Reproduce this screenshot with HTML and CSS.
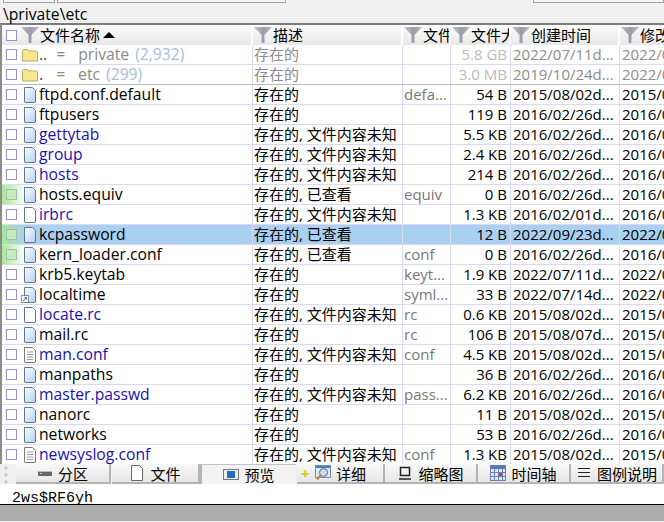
FILE: index.html
```html
<!DOCTYPE html>
<html lang="en">
<head>
  <meta charset="UTF-8">
  <title>\private\etc</title>
  <link rel="stylesheet" href="styles.css">
</head>
<body>
  <svg class="defs" width="0" height="0">
    <defs>
      <linearGradient id="g-doc" x1="0" y1="0" x2="1" y2="1">
        <stop offset="0" stop-color="#fbfdff"/>
        <stop offset="1" stop-color="#b4d0f2"/>
      </linearGradient>
      <linearGradient id="g-flt" x1="0" y1="0" x2="1" y2="0">
        <stop offset="0" stop-color="#c4c4cc"/>
        <stop offset=".5" stop-color="#9c9ca8"/>
        <stop offset="1" stop-color="#b8b8c2"/>
      </linearGradient>
    </defs>
    <symbol id="i-filter" viewBox="0 0 18 16"><path d="M0 0h18l-7.500 8v8h-3v-8z" fill="url(#g-flt)"/></symbol>
    <symbol id="i-folder" viewBox="0 0 16 14"><path d="M.5 13V2.500l1-1h4l1 1.500h8l1 1V13z" fill="#fbe68f" stroke="#b5ad6b"/></symbol>
    <symbol id="i-file" viewBox="0 0 14 16"><path d="M1.500.5h8l3 3V15l-.5.500H2l-.5-.5z" fill="url(#g-doc)" stroke="#5f7690"/></symbol>
    <symbol id="i-blank" viewBox="0 0 14 16"><path d="M1.500.5h8l3 3V15l-.5.500H2l-.5-.5z" fill="#fff" stroke="#5f7690"/></symbol>
    <symbol id="i-text" viewBox="0 0 14 16"><path d="M1.500.5h8l3 3V15l-.5.500H2l-.5-.5z" fill="#fff" stroke="#777"/><path d="M4 5h6M4 7.500h6M4 10h6M4 12.500h6" stroke="#999"/></symbol>
  </svg>

  <div class="toolbar-edge">
    <span class="edge-box edge-a"></span>
    <span class="edge-box edge-b"></span>
    <span class="edge-box edge-c"></span>
  </div>
  <div class="path">\private\etc</div>

  <div class="list">
    <div class="row head">
      <div class="c name"><i class="chk"></i><svg class="flt"><use href="#i-filter"/></svg>文件名称<span class="sort"></span></div>
      <div class="c desc"><svg class="flt"><use href="#i-filter"/></svg>描述</div>
      <div class="c ext"><svg class="flt"><use href="#i-filter"/></svg>文件</div>
      <div class="c size"><svg class="flt"><use href="#i-filter"/></svg>文件大小</div>
      <div class="c created"><svg class="flt"><use href="#i-filter"/></svg>创建时间</div>
      <div class="c modified"><svg class="flt"><use href="#i-filter"/></svg>修改时间</div>
    </div>

    <div class="row dim">
      <div class="c name"><i class="chk"></i><svg class="ico folder"><use href="#i-folder"/></svg><span class="dots">..</span><span class="eq">=</span><span class="parent">private</span><span class="count">(2,932)</span></div>
      <div class="c desc">存在的</div><div class="c ext"></div><div class="c size">5.8 GB</div><div class="c created">2022/07/11d...</div><div class="c modified">2022/07/11d...</div>
    </div>
    <div class="row dim dim-last">
      <div class="c name"><i class="chk"></i><svg class="ico folder"><use href="#i-folder"/></svg><span class="dots dot-one">.</span><span class="eq">=</span><span class="parent">etc</span><span class="count">(299)</span></div>
      <div class="c desc">存在的</div><div class="c ext"></div><div class="c size">3.0 MB</div><div class="c created">2019/10/24d...</div><div class="c modified">2022/07/11d...</div>
    </div>
    <div class="row">
      <div class="c name"><i class="chk"></i><svg class="ico"><use href="#i-file"/></svg>ftpd.conf.default</div>
      <div class="c desc">存在的</div><div class="c ext">defa...</div><div class="c size">54 B</div><div class="c created">2015/08/02d...</div><div class="c modified">2015/08/02d...</div>
    </div>
    <div class="row">
      <div class="c name"><i class="chk"></i><svg class="ico"><use href="#i-file"/></svg>ftpusers</div>
      <div class="c desc">存在的</div><div class="c ext"></div><div class="c size">119 B</div><div class="c created">2016/02/26d...</div><div class="c modified">2016/02/26d...</div>
    </div>
    <div class="row unread">
      <div class="c name"><i class="chk"></i><svg class="ico"><use href="#i-file"/></svg>gettytab</div>
      <div class="c desc">存在的, 文件内容未知</div><div class="c ext"></div><div class="c size">5.5 KB</div><div class="c created">2016/02/26d...</div><div class="c modified">2016/02/26d...</div>
    </div>
    <div class="row unread">
      <div class="c name"><i class="chk"></i><svg class="ico"><use href="#i-file"/></svg>group</div>
      <div class="c desc">存在的, 文件内容未知</div><div class="c ext"></div><div class="c size">2.4 KB</div><div class="c created">2016/02/26d...</div><div class="c modified">2016/02/26d...</div>
    </div>
    <div class="row unread">
      <div class="c name"><i class="chk"></i><svg class="ico"><use href="#i-file"/></svg>hosts</div>
      <div class="c desc">存在的, 文件内容未知</div><div class="c ext"></div><div class="c size">214 B</div><div class="c created">2016/02/26d...</div><div class="c modified">2016/02/26d...</div>
    </div>
    <div class="row seen">
      <div class="c name"><i class="chk"></i><svg class="ico"><use href="#i-file"/></svg>hosts.equiv</div>
      <div class="c desc">存在的, 已查看</div><div class="c ext">equiv</div><div class="c size">0 B</div><div class="c created">2016/02/26d...</div><div class="c modified">2016/02/26d...</div>
    </div>
    <div class="row unread">
      <div class="c name"><i class="chk"></i><svg class="ico"><use href="#i-blank"/></svg>irbrc</div>
      <div class="c desc">存在的, 文件内容未知</div><div class="c ext"></div><div class="c size">1.3 KB</div><div class="c created">2016/02/01d...</div><div class="c modified">2016/02/01d...</div>
    </div>
    <div class="row seen selected">
      <div class="c name"><i class="chk"></i><svg class="ico"><use href="#i-file"/></svg>kcpassword</div>
      <div class="c desc">存在的, 已查看</div><div class="c ext"></div><div class="c size">12 B</div><div class="c created">2022/09/23d...</div><div class="c modified">2022/09/23d...</div>
    </div>
    <div class="row seen">
      <div class="c name"><i class="chk"></i><svg class="ico"><use href="#i-file"/></svg>kern_loader.conf</div>
      <div class="c desc">存在的, 已查看</div><div class="c ext">conf</div><div class="c size">0 B</div><div class="c created">2016/02/26d...</div><div class="c modified">2016/02/26d...</div>
    </div>
    <div class="row">
      <div class="c name"><i class="chk"></i><svg class="ico"><use href="#i-file"/></svg>krb5.keytab</div>
      <div class="c desc">存在的</div><div class="c ext">keyt...</div><div class="c size">1.9 KB</div><div class="c created">2022/07/11d...</div><div class="c modified">2022/07/11d...</div>
    </div>
    <div class="row">
      <div class="c name"><i class="chk"></i><span class="link-wrap"><svg class="ico"><use href="#i-file"/></svg><svg class="link-badge" viewBox="0 0 8 8"><rect x=".5" y=".5" width="7" height="7" fill="#fff" stroke="#333" stroke-dasharray="1 1"/><path d="M2 6l3-3M3.500 2.500H5.500V4.500" fill="none" stroke="#1f7fd8"/></svg></span>localtime</div>
      <div class="c desc">存在的</div><div class="c ext">syml...</div><div class="c size">33 B</div><div class="c created">2022/07/14d...</div><div class="c modified">2022/07/14d...</div>
    </div>
    <div class="row unread">
      <div class="c name"><i class="chk"></i><svg class="ico"><use href="#i-blank"/></svg>locate.rc</div>
      <div class="c desc">存在的, 文件内容未知</div><div class="c ext">rc</div><div class="c size">0.6 KB</div><div class="c created">2015/08/02d...</div><div class="c modified">2015/08/02d...</div>
    </div>
    <div class="row">
      <div class="c name"><i class="chk"></i><svg class="ico"><use href="#i-file"/></svg>mail.rc</div>
      <div class="c desc">存在的</div><div class="c ext">rc</div><div class="c size">106 B</div><div class="c created">2015/08/07d...</div><div class="c modified">2015/08/07d...</div>
    </div>
    <div class="row unread">
      <div class="c name"><i class="chk"></i><svg class="ico"><use href="#i-text"/></svg>man.conf</div>
      <div class="c desc">存在的, 文件内容未知</div><div class="c ext">conf</div><div class="c size">4.5 KB</div><div class="c created">2015/08/02d...</div><div class="c modified">2015/08/02d...</div>
    </div>
    <div class="row">
      <div class="c name"><i class="chk"></i><svg class="ico"><use href="#i-file"/></svg>manpaths</div>
      <div class="c desc">存在的</div><div class="c ext"></div><div class="c size">36 B</div><div class="c created">2016/02/26d...</div><div class="c modified">2016/02/26d...</div>
    </div>
    <div class="row unread">
      <div class="c name"><i class="chk"></i><svg class="ico"><use href="#i-file"/></svg>master.passwd</div>
      <div class="c desc">存在的, 文件内容未知</div><div class="c ext">pass...</div><div class="c size">6.2 KB</div><div class="c created">2016/02/26d...</div><div class="c modified">2016/02/26d...</div>
    </div>
    <div class="row">
      <div class="c name"><i class="chk"></i><svg class="ico"><use href="#i-file"/></svg>nanorc</div>
      <div class="c desc">存在的</div><div class="c ext"></div><div class="c size">11 B</div><div class="c created">2015/08/02d...</div><div class="c modified">2015/08/02d...</div>
    </div>
    <div class="row">
      <div class="c name"><i class="chk"></i><svg class="ico"><use href="#i-file"/></svg>networks</div>
      <div class="c desc">存在的</div><div class="c ext"></div><div class="c size">53 B</div><div class="c created">2016/02/26d...</div><div class="c modified">2016/02/26d...</div>
    </div>
    <div class="row unread">
      <div class="c name"><i class="chk"></i><svg class="ico"><use href="#i-text"/></svg>newsyslog.conf</div>
      <div class="c desc">存在的, 文件内容未知</div><div class="c ext">conf</div><div class="c size">1.3 KB</div><div class="c created">2015/08/02d...</div><div class="c modified">2015/08/02d...</div>
    </div>
  </div>

  <div class="tabs">
    <div class="tab t1"><svg class="tab-ico" viewBox="0 0 16 16"><rect x="1" y="6" width="14" height="5" rx="1" fill="#666"/><rect x="1" y="6" width="14" height="1" fill="#bbb"/><rect x="3" y="8" width="2" height="1" fill="#6f6"/></svg>分区</div>
    <div class="tab t2"><svg class="tab-ico" viewBox="0 0 16 16"><path d="M2.500.5h8l3 3v12h-11z" fill="#fff" stroke="#666"/></svg>文件</div>
    <div class="tab t3"><svg class="tab-ico" viewBox="0 0 16 16"><rect x=".5" y="3.500" width="15" height="10" fill="#eee" stroke="#777"/><rect x="4" y="5" width="8" height="7" fill="#1f6fc4"/></svg>预览</div>
    <div class="tab t4"><span class="plus">+</span><svg class="tab-ico" viewBox="0 0 16 16"><rect x=".5" y=".5" width="15" height="12" fill="#dce9f7" stroke="#6d8fae"/><rect x="1" y="1" width="14" height="2" fill="#4a7fb8"/><circle cx="8.500" cy="7.500" r="4" fill="#c5def5" stroke="#667"/><path d="M5.500 10.500l-3.500 4" stroke="#c08a30" stroke-width="2"/></svg>详细</div>
    <div class="tab t5"><svg class="tab-ico" viewBox="0 0 16 16"><path d="M3.500 2.500h9v8h-9zM2 14h12" fill="none" stroke="#222" stroke-width="1.500"/></svg>缩略图</div>
    <div class="tab t6"><svg class="tab-ico" viewBox="0 0 16 16"><rect x=".5" y=".5" width="15" height="15" fill="#dde6f5" stroke="#6a7fb5"/><rect x="1" y="1" width="14" height="3" fill="#5a78b8"/><path d="M.5 7.500h15M.5 11.500h15M4.500 4v12M8.500 4v12M12.500 4v12" stroke="#6a7fb5"/><rect x="9" y="8" width="3" height="3" fill="#e33"/></svg>时间轴</div>
    <div class="tab t7"><svg class="tab-ico" viewBox="0 0 16 16"><path d="M2 3.500h12M2 7.500h12M2 11.500h12" stroke="#222"/></svg>图例说明</div>
  </div>

  <div class="status">2ws$RF6yh</div>
  <div class="footer-gap"></div>
</body>
</html>
```

FILE: styles.css
```css
html, body {
  margin: 0;
  padding: 0;
  height: 522px;
  overflow: hidden;
}
body {
  width: 664px;
  background-color: #f0f0f0;
  font-family: "Open Sans", "Noto Sans CJK SC", sans-serif;
  font-size: 15px;
  color: #000;
}
.defs {
  display: block;
  height: 0;
}
.toolbar-edge {
  display: flex;
  height: 4px;
  padding-left: 3px;
  box-sizing: border-box;
}
.edge-box {
  display: block;
  height: 3px;
  border: 1px solid #a0a0a0;
  border-top: none;
  box-sizing: border-box;
  background: #f4f4f4;
}
.edge-a { width: 52px; margin-right: 2px; }
.edge-b { width: 229px; margin-right: 247px; }
.edge-c { width: 131px; }
.path {
  height: 19px;
  line-height: 21px;
  padding-left: 3px;
  font-size: 15.7px;
}

.list {
  height: 441px;
  border-top: 2px solid #7c7c7c;
  border-left: 2px solid #8c8c8c;
  background: #fff;
  overflow: hidden;
  box-sizing: border-box;
}
.row {
  display: flex;
  height: 20px;
  box-sizing: border-box;
  border-bottom: 1px solid #dcd8f4;
  line-height: 19px;
  white-space: nowrap;
}
.c {
  flex: none;
  box-sizing: border-box;
  overflow: hidden;
  border-right: 1px solid #dcd8f4;
  padding-left: 1px;
}
.name {
  width: 251px;
  display: flex;
  align-items: center;
  padding-left: 4px;
  font-size: 15.7px;
}
.desc { width: 150px; }
.ext { width: 48px; color: #777; padding-left: 1px; }
.size { width: 60px; text-align: right; padding: 0 3px 0 0; }
.created { width: 109px; padding-left: 2px; }
.modified { width: 60px; border-right: none; padding-left: 2px; }

.head {
  height: 20px;
  border-bottom: none;
  background: linear-gradient(#fbfbfb, #e8e8e8);
  line-height: 20px;
}
.head .c {
  display: flex;
  align-items: center;
  border-right: 2px solid #fff;
  padding-left: 0;
  text-align: left;
  color: #000;
  font-size: 15px;
}
.head .name { padding-left: 4px; }
.flt {
  flex: none;
  width: 18px;
  height: 16px;
  margin-left: 1px;
  margin-right: 1px;
}
.head .name .flt { margin-left: 0; }
.sort {
  width: 0;
  height: 0;
  margin-left: 3px;
  border: 6px solid transparent;
  border-top: none;
  border-bottom: 6px solid #000;
}
.chk {
  flex: none;
  display: block;
  width: 9px;
  height: 9px;
  margin-right: 5px;
  border: 1px solid #9b8fd6;
  background: #fff;
}
.head .chk { margin-right: 4px; }
.ico {
  flex: none;
  width: 14px;
  height: 16px;
  margin-left: 1px;
  margin-right: 2px;
}
.folder {
  width: 16px;
  height: 14px;
  margin: 0 1px 0 0;
}
.link-wrap {
  position: relative;
  display: flex;
}
.link-badge {
  position: absolute;
  left: -1px;
  bottom: 0;
  width: 8px;
  height: 8px;
}

.dim .c { color: #8c8c8c; }
.dim .name { color: #8a8a8a; }
.dim-last { border-bottom-color: #b8b8c8; }
.dots { color: #444; }
.eq { margin: 0 13px 0 9px; }
.dot-one { margin-right: 4px; }
.parent { margin-right: 6px; }
.dim .count { color: #a6bcdc; }
.dim .size { color: #bbb; }

.unread .name { color: #1a10b0; }
.seen .name { background: linear-gradient(to right, #a6ea8e, #fff 24px); }
.seen .chk { background: #c4efb4; border-color: #a8b8c0; }
.selected,
.selected .c { background: #a9d0f0; }
.selected .name { background: linear-gradient(to right, #a6ea8e, #a9d0f0 24px); }

.tabs {
  display: flex;
  height: 20px;
  padding-left: 16px;
  box-sizing: border-box;
  /* grip dots at the left of the bar */
  background:
    radial-gradient(circle at 6px 4px, #cfcfcf 1.500px, transparent 2px),
    radial-gradient(circle at 6px 11px, #cfcfcf 1.500px, transparent 2px),
    radial-gradient(circle at 6px 18px, #cfcfcf 1.500px, transparent 2px),
    #f0f0f0;
}
.tab {
  flex: none;
  display: flex;
  align-items: center;
  justify-content: center;
  gap: 5px;
  box-sizing: border-box;
  height: 20px;
  background: linear-gradient(#f8f8f8, #e6e6e6);
  border-right: 2px solid #b4b4b4;
  border-bottom: 2px solid #b4b4b4;
}
.tab-ico {
  flex: none;
  width: 16px;
  height: 16px;
}
.t1 { width: 95px; margin-right: 1px; }
.t2 { width: 88px; }
.t3 {
  width: 96px;
  margin-right: 1px;
  background: #f2f2f2;
  border-left: 2px solid #b4b4b4;
  border-top: 1px solid #c4c4c4;
  border-right: none;
  border-bottom: none;
  padding-bottom: 1px;
}
.t4 { width: 88px; justify-content: flex-start; padding-left: 4px; }
.t5, .t6, .t7 { width: 93px; }
.plus {
  flex: none;
  width: 9px;
  color: #d8c400;
  font-weight: bold;
}
.status {
  height: 20px;
  box-sizing: border-box;
  padding: 2px 0 0 12px;
  line-height: 25px;
  background: #fff;
  font-family: "Liberation Mono", monospace;
  font-size: 15px;
}
.footer-gap {
  height: 17px;
  background: #ababab;
  border-top: 1px solid #000;
  box-sizing: border-box;
}
```
